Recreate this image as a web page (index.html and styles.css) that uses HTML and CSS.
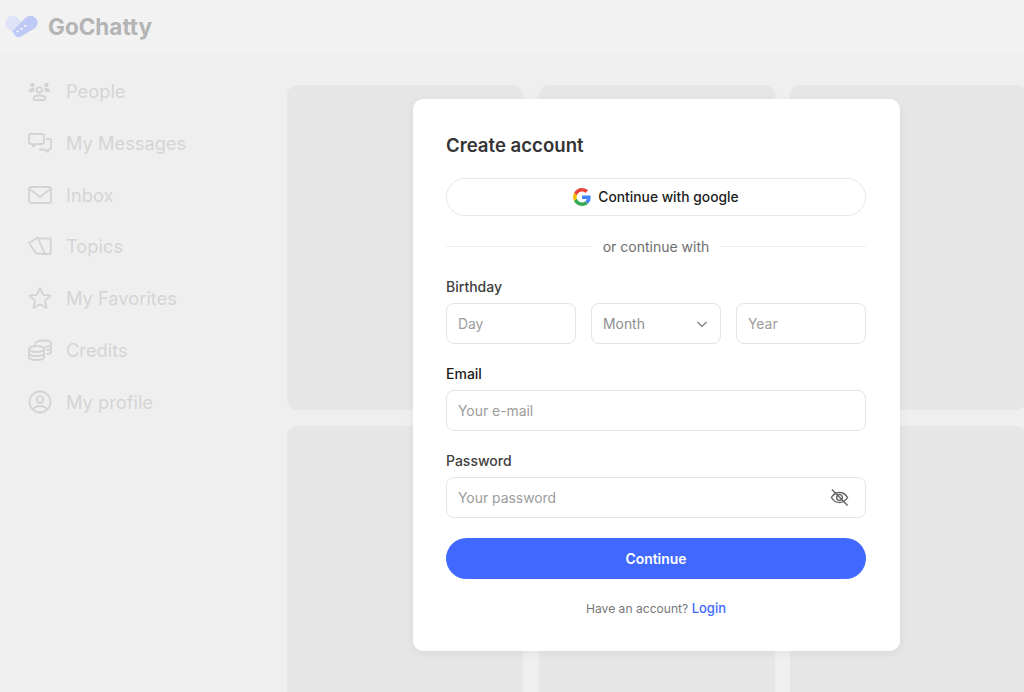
FILE: index.html
```html
<!DOCTYPE html>
<html lang="en">
<head>
  <meta charset="UTF-8">
  <meta name="viewport" content="width=device-width, initial-scale=1.0">
  <title>GoChatty</title>
  <link rel="stylesheet" href="styles.css">
</head>
<body>
  <header class="header">
    <svg class="logo" viewBox="0 0 34 24" width="33" height="24">
      <path d="M2.2 3.2C5-.4 10.3-.2 13 2.5L24 13.5 17 21C15.5 22.8 12.8 23 11 21.3L2.8 13C0 10.3-.2 6.2 2.2 3.2Z" fill="#dfe3f8"/>
      <path d="M32 3.2C29.2-.4 24-.3 21.2 2.5L7.8 16 11 21.3C12.8 23 15.5 22.8 17.2 21.2L31.3 13C34 10.3 34.4 6.2 32 3.2Z" fill="#bfc9f5"/>
      <circle cx="13" cy="16.5" r="1.1" fill="#fff"/><circle cx="17" cy="13.8" r="1.1" fill="#fff"/><circle cx="21" cy="11" r="1.1" fill="#fff"/>
    </svg>
    <span class="brand">GoChatty</span>
  </header>

  <div class="layout">
    <nav class="sidebar">
      <a class="nav-item" href="#">
        <svg viewBox="0 0 24 24"><circle cx="4.5" cy="6" r="2.2" class="solid"/><circle cx="18.5" cy="6" r="2.2" class="solid"/><path d="M.5 13c0-2.500 2-4 4-4 1.500 0 2.500.5 3 1.500-1 .5-1.700 1.500-1.900 2.500Z" class="solid"/><path d="M22.500 13c0-2.500-2-4-4-4-1.500 0-2.500.5-3 1.500 1 .5 1.700 1.500 1.900 2.500Z" class="solid"/><circle cx="11.500" cy="11" r="2.700"/><path d="M5.500 19.500c0-2 2.500-3 6-3s6 1 6 3c0 .8-.5 1.500-1.200 1.500H6.700c-.7 0-1.200-.7-1.200-1.500Z"/></svg>
        People
      </a>
      <a class="nav-item" href="#">
        <svg viewBox="0 0 24 24"><path d="M2.500 3h12c.8 0 1.500.7 1.500 1.500v7c0 .8-.7 1.500-1.500 1.500H8l-3 2.500V13H2.500C1.700 13 1 12.300 1 11.500v-7C1 3.700 1.700 3 2.500 3Z"/><path d="M19 8h2.500c.8 0 1.500.7 1.500 1.500V17c0 .8-.7 1.500-1.500 1.500H20V21l-3.500-2.500H12"/></svg>
        My Messages
      </a>
      <a class="nav-item" href="#">
        <svg viewBox="0 0 24 24"><rect x="1" y="4" width="22" height="16" rx="2"/><path d="M1.500 6 12 14 22.500 6"/></svg>
        Inbox
      </a>
      <a class="nav-item" href="#">
        <svg viewBox="0 0 24 24"><path d="M1 9 9.500 3.500 17 20 8 19.500 1 9Z"/><path d="M10.500 4.500H22c.4 0 .7.300.7.700V19c0 .6-.4 1-1 1H17"/></svg>
        Topics
      </a>
      <a class="nav-item" href="#">
        <svg viewBox="0 0 24 24"><path d="M12 2l3.100 6.900 7.400.8-5.500 5 1.500 7.300-6.500-3.700L5.500 22 7 14.700l-5.500-5 7.400-.8L12 2Z"/></svg>
        My Favorites
      </a>
      <a class="nav-item" href="#">
        <svg viewBox="0 0 24 24"><ellipse cx="8.500" cy="11" rx="7.500" ry="3"/><path d="M1 11v8c0 1.800 3.400 3 7.500 3s7.500-1.200 7.500-3v-8M1 15c0 1.800 3.400 3 7.500 3s7.500-1.200 7.500-3"/><path d="M7 6.500C7 4 10 2.500 15 2.500S23 3.500 23 5.500 21 8.500 17.500 9M23 5.500V14c0 .8-1.500 1.800-4 2.200M23 10c0 .8-1.500 1.600-4 2"/></svg>
        Credits
      </a>
      <a class="nav-item" href="#">
        <svg viewBox="0 0 24 24"><circle cx="12" cy="12" r="10.500"/><circle cx="12" cy="9.500" r="3.300"/><path d="M5 19.500c1.500-2.500 4-3.500 7-3.500s5.500 1 7 3.500"/></svg>
        My profile
      </a>
    </nav>

    <main class="cards">
      <div class="card"></div>
      <div class="card"></div>
      <div class="card"></div>
      <div class="card"></div>
      <div class="card"></div>
      <div class="card"></div>
    </main>
  </div>

  <!-- Sign up dialog -->
  <form class="modal">
    <h2 class="modal-title">Create account</h2>

    <button type="button" class="google-btn">
      <svg viewBox="0 0 48 48" width="18" height="18">
        <path fill="#ea4335" d="M24 9.500c3.500 0 6.700 1.200 9.200 3.600l6.900-6.900C35.900 2.400 30.500 0 24 0 14.600 0 6.500 5.400 2.600 13.200l8 6.200C12.400 13.700 17.700 9.500 24 9.500Z"/>
        <path fill="#4285f4" d="M47 24.500c0-1.600-.1-3.100-.4-4.500H24v9h12.900c-.6 3-2.200 5.500-4.700 7.200l7.700 6C44.400 37.900 47 31.800 47 24.500Z"/>
        <path fill="#fbbc05" d="M10.600 28.600c-.5-1.400-.8-3-.8-4.600s.3-3.200.8-4.600l-8-6.200C.9 16.500 0 20.100 0 24s.9 7.500 2.600 10.800l8-6.200Z"/>
        <path fill="#34a853" d="M24 48c6.500 0 11.900-2.100 15.900-5.800l-7.700-6c-2.200 1.400-4.900 2.300-8.200 2.300-6.300 0-11.600-4.200-13.400-9.900l-8 6.200C6.500 42.600 14.600 48 24 48Z"/>
      </svg>
      Continue with google
    </button>

    <div class="divider"><span>or continue with</span></div>

    <div class="field">
      <label class="field-label">Birthday</label>
      <div class="birthday">
        <input class="input" type="text" placeholder="Day">
        <div class="input select">
          Month
          <svg viewBox="0 0 12 12" width="12" height="12"><path d="M1.500 4 6 8.500 10.500 4"/></svg>
        </div>
        <input class="input" type="text" placeholder="Year">
      </div>
    </div>

    <div class="field">
      <label class="field-label dark">Email</label>
      <input class="input" type="text" placeholder="Your e-mail">
    </div>

    <div class="field">
      <label class="field-label">Password</label>
      <div class="password-wrap">
        <input class="input" type="password" placeholder="Your password">
        <svg class="eye" viewBox="0 0 20 20" width="19" height="19">
          <path d="M1.500 10C3.500 6.500 6.500 4.700 10 4.700s6.500 1.800 8.500 5.300c-2 3.500-5 5.300-8.500 5.300S3.500 13.500 1.500 10Z"/>
          <circle cx="10" cy="10" r="3"/>
          <path d="M2 1.500 18.500 18.500"/>
        </svg>
      </div>
    </div>

    <button type="button" class="submit-btn">Continue</button>

    <p class="login-row">Have an account? <a href="#">Login</a></p>
  </form>
</body>
</html>
```

FILE: styles.css
```css
body {
  display: flex;
  flex-direction: column;
  height: 100vh;
  margin: 0;
  overflow: hidden;
  font-family: Inter, "Liberation Sans", sans-serif;
  background-color: #efefef;
}
.header {
  display: flex;
  flex: none;
  align-items: center;
  gap: 10px;
  height: 54px;
  padding: 0 0 1px 5px;
  box-sizing: border-box;
  background-color: #f2f2f2;
}
.brand {
  font-size: 22.5px;
  font-weight: 700;
  color: #b4b4b4;
}
.layout {
  display: flex;
  flex: 1;
  min-height: 0;
  overflow: hidden;
}
.sidebar {
  display: flex;
  flex-direction: column;
  gap: 21.8px;
  flex: 0 0 259px;
  padding: 22px 0 0 28px;
}
.nav-item {
  display: flex;
  align-items: center;
  gap: 14px;
  height: 30px;
  font-size: 18.3px;
  color: #d5d5d5;
  text-decoration: none;
}
.nav-item svg {
  width: 24px;
  height: 24px;
  fill: none;
  stroke: #d3d3d3;
  stroke-width: 1.8;
  stroke-linecap: round;
  stroke-linejoin: round;
}
.nav-item svg .solid {
  fill: #d3d3d3;
  stroke: none;
}
.cards {
  display: grid;
  grid-template-columns: 236px 236px 236px;
  grid-template-rows: 325px 325px;
  gap: 16px 15.5px;
  padding-top: 31px;
}
.card {
  background-color: #e6e6e6;
  border-radius: 10px;
}

.modal {
  position: absolute;
  left: 413px;
  top: 99px;
  width: 487px;
  height: 552px;
  box-sizing: border-box;
  padding: 34px 34px 0 33px;
  background-color: #ffffff;
  border-radius: 10px;
  box-shadow: 0 2px 10px rgba(0, 0, 0, 0.06);
}
.modal-title {
  margin: 0 0 20px;
  font-size: 18.6px;
  line-height: 25px;
  font-weight: 600;
  color: #333333;
}
.google-btn {
  display: flex;
  align-items: center;
  justify-content: center;
  gap: 7px;
  width: 100%;
  height: 38px;
  padding: 0;
  font-family: inherit;
  font-size: 13.8px;
  font-weight: 500;
  color: #1c1c1c;
  background-color: #ffffff;
  border: 1px solid #e8e8ec;
  border-radius: 19px;
}
.divider {
  display: flex;
  align-items: center;
  gap: 10px;
  height: 20px;
  margin: 20px 0 21px;
  font-size: 14px;
  color: #6e6e6e;
}
.divider::before, .divider::after {
  content: "";
  flex: 1;
  height: 1px;
  background-color: #eeeff3;
}
.field {
  margin-bottom: 20px;
}
.field-label {
  display: block;
  margin-bottom: 6px;
  font-size: 14px;
  line-height: 20px;
  font-weight: 500;
  color: #404040;
}
.field-label.dark {
  color: #1c1c1c;
}
.birthday {
  display: grid;
  grid-template-columns: repeat(3, 130px);
  gap: 15px;
}
.input {
  display: block;
  width: 100%;
  height: 41px;
  box-sizing: border-box;
  padding: 0 11px;
  font-family: inherit;
  font-size: 13.9px;
  color: #8e8e8e;
  background-color: #ffffff;
  border: 1px solid #e3e3ea;
  border-radius: 8px;
  outline: none;
}
.input::placeholder {
  color: #9c9c9c;
  opacity: 1;
}
.select {
  display: flex;
  align-items: center;
  justify-content: space-between;
  padding-right: 12px;
}
.select svg {
  fill: none;
  stroke: #777777;
  stroke-width: 1.2;
}
.password-wrap {
  position: relative;
}
.eye {
  position: absolute;
  right: 17px;
  top: 11px;
  fill: none;
  stroke: #666666;
  stroke-width: 1.5;
}
.submit-btn {
  display: block;
  width: 100%;
  height: 41px;
  padding: 0;
  font-family: inherit;
  font-size: 13.9px;
  font-weight: 600;
  color: #ffffff;
  background-color: #4169ff;
  border: none;
  border-radius: 21px;
}
.login-row {
  margin: 20px 0 0;
  font-size: 12.1px;
  line-height: 18px;
  text-align: center;
  color: #777777;
}
.login-row a {
  font-size: 13px;
  font-weight: 500;
  color: #4169ff;
  text-decoration: none;
}
```
